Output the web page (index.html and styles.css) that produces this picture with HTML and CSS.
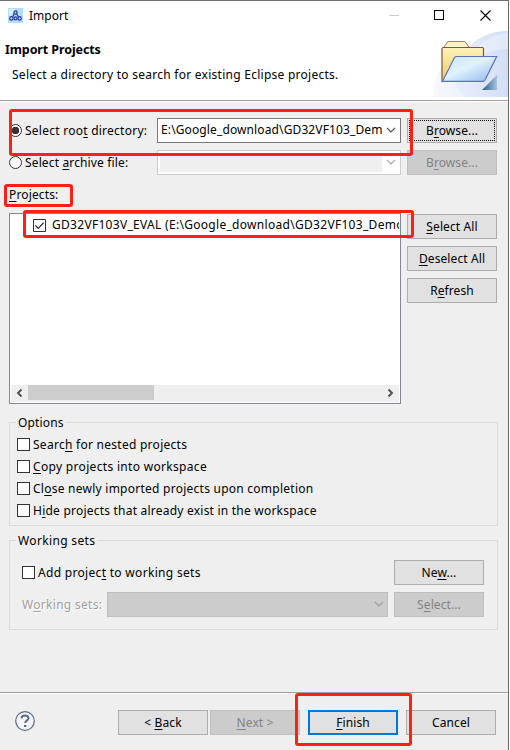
FILE: index.html
```
<!DOCTYPE html>
<html lang="en">
<head>
<meta charset="utf-8">
<title>Import</title>
<link rel="stylesheet" href="styles.css">
</head>
<body>
<div class="window">
  <header class="header">
    <div class="titlebar">
      <svg class="app-icon" width="15" height="15" viewBox="0 0 15 15"><rect width="15" height="15" fill="#b5dcf8"/><path d="M1 1h7L1 9z" fill="#d8eefc"/><g fill="none" stroke="#28399a" stroke-width="1.2"><circle cx="7.5" cy="4.500" r="1.600"/><circle cx="3.400" cy="10.400" r="1.700"/><circle cx="7.5" cy="10.400" r="1.500"/><circle cx="11.600" cy="10.400" r="1.700"/><path d="M6.400 5.700L4.600 9M8.600 5.700L10.400 9"/></g></svg>
      <span class="title">Import</span>
      <svg class="controls" width="120" height="30" viewBox="0 0 120 30" fill="none" shape-rendering="crispEdges"><path d="M8 15.5h10" stroke="#ccc"/><rect x="53.500" y="10.500" width="9" height="9" stroke="#000"/><path d="M99.500 10.500l10 10M109.500 10.500l-10 10" stroke="#000" stroke-width="1.100" shape-rendering="auto"/></svg>
    </div>
    <h1>Import Projects</h1>
    <p>Select a directory to search for existing Eclipse projects.</p>
    <svg class="banner" width="75" height="68" viewBox="433 30 75 68">
      <defs>
        <linearGradient id="bg" x1="0" x2="1"><stop offset="0" stop-color="#f3f6fd"/><stop offset="1" stop-color="#d3def5"/></linearGradient>
        <linearGradient id="back" x1="0" y1="0" x2="0" y2="1"><stop offset="0" stop-color="#fdf3b8"/><stop offset="1" stop-color="#ecca60"/></linearGradient>
        <linearGradient id="front" x1="0" y1="0" x2="1" y2="1"><stop offset="0" stop-color="#cfe3fb"/><stop offset=".45" stop-color="#dff2fe"/><stop offset="1" stop-color="#8fb5ea"/></linearGradient>
        <linearGradient id="tri"><stop offset="0" stop-color="#2d568e"/><stop offset="1" stop-color="#a5c4dc"/></linearGradient>
      </defs>
      <path d="M433 97C434 73 446 57 463 52C475 39 488 31 508 31V97z" fill="url(#bg)"/>
      <path d="M433 97C434 81 440 68 450 61Q451 86 466 97zM472 52Q488 35 508 33V49Q490 49 480 58z" fill="#fff" opacity=".3"/>
      <path d="M444 47l4-5.500h17l4 5.500" fill="#fbf3c4" stroke="#a98055"/>
      <path d="M442 48.500q0-1 1-1h39.500q1 0 1 1V78l-41.500 3.500z" fill="url(#back)" stroke="#805549" stroke-width="1.200"/>
      <path d="M454.500 57.500q.6-1 2-1h40.200L485 80q-.7 1.300-2 1.300h-40.500z" fill="url(#front)" stroke="#5a73bd" stroke-width="1.200"/>
      <path d="M482 90h15V75z" fill="url(#tri)"/>
    </svg>
  </header>

  <main class="content">
    <section class="sources">
      <div class="source"><i class="radio on"></i><span class="label s1">Select roo<u>t</u> directory:</span><div class="combo"><span>E:\Google_download\GD32VF103_Dem</span><svg width="10" height="7" viewBox="0 0 10 7"><path d="M1 1l4 4 4-4" fill="none" stroke="#555" stroke-width="1.200"/></svg></div><button class="focused">B<u>r</u>owse...</button></div>
      <div class="source"><i class="radio"></i><span class="label s2">Select <u>a</u>rchive file:</span><div class="combo off"><span></span><svg width="10" height="7" viewBox="0 0 10 7"><path d="M1 1l4 4 4-4" fill="none" stroke="#aaa" stroke-width="1.200"/></svg></div><button disabled>B<u>r</u>owse...</button></div>
    </section>
    <div class="projects-label"><u>P</u>rojects:</div>
    <section class="projects">
      <div class="list">
        <div class="item"><svg class="check" width="13" height="13" viewBox="0 0 13 13"><path d="M.5.5h12v12H.5z" fill="#fff" stroke="#333"/><path d="M2.500 6.500L5.300 9.300l5.300-5.600" fill="none" stroke="#222" stroke-width="1.200"/></svg><span>GD32VF103V_EVAL (E:\Google_download\GD32VF103_Demo</span></div>
        <div class="scrollbar"><svg width="17" height="17" viewBox="0 0 17 17"><path d="M10.500 4.500L7 8l3.500 3.500" fill="none" stroke="#505050" stroke-width="1.900"/></svg><i class="thumb"></i><svg width="17" height="17" viewBox="0 0 17 17"><path d="M6.500 4.500L10 8l-3.500 3.500" fill="none" stroke="#505050" stroke-width="1.900"/></svg></div>
      </div>
      <div class="side"><button><u>S</u>elect All</button><button><u>D</u>eselect All</button><button>R<u>e</u>fresh</button></div>
    </section>
    <fieldset class="options">
      <legend>Options</legend>
      <div class="option"><i class="box"></i><span class="o1">Searc<u>h</u> for nested projects</span></div>
      <div class="option"><i class="box"></i><span class="o2"><u>C</u>opy projects into workspace</span></div>
      <div class="option"><i class="box"></i><span class="o3">Cl<u>o</u>se newly imported projects upon completion</span></div>
      <div class="option"><i class="box"></i><span class="o4">H<u>i</u>de projects that already exist in the workspace</span></div>
    </fieldset>
    <fieldset class="sets">
      <legend>Working sets</legend>
      <div class="set-row"><i class="box"></i><span class="w1">Add projec<u>t</u> to working sets</span><button>Ne<u>w</u>...</button></div>
      <div class="set-row"><span class="dim">W<u>o</u>rking sets:</span><div class="set-combo"><svg width="10" height="7" viewBox="0 0 10 7"><path d="M1 1l4 4 4-4" fill="none" stroke="#a0a0a0" stroke-width="1.200"/></svg></div><button disabled>S<u>e</u>lect...</button></div>
    </fieldset>
  </main>

  <footer class="footer">
    <svg class="help" width="22" height="22" viewBox="0 0 22 22" fill="none"><circle cx="11" cy="11" r="9.300" fill="#f3f5f9" stroke="#5d6c8b" stroke-width="1.200"/><path d="M7.500 8.400Q7.600 5.500 11 5.500q3.500 0 3.500 2.700c0 2.200-3.300 2.300-3.300 4.900" stroke="#5d6c8b" stroke-width="2"/><path d="M10 15h2.300v2H10z" fill="#5d6c8b"/></svg>
    <button class="back">&lt; <u>B</u>ack</button><button class="next" disabled><u>N</u>ext &gt;</button><button class="finish"><u>F</u>inish</button><button class="cancel">Cancel</button>
  </footer>
  <div class="mark m1"></div><div class="mark m2"></div><div class="mark m3"></div><div class="mark m4"></div>
</div>
</body>
</html>
```
FILE: styles.css
```
* { box-sizing: border-box; }
body { margin: 0; background: #fff; }
.window { position: relative; width: 509px; height: 750px; overflow: hidden; display: flex; flex-direction: column; background: #efefef; border-top: 1px solid #707070; border-right: 1px solid #696969; font: 12px/16px "Noto Sans", "Open Sans", sans-serif; color: #000; white-space: nowrap; }
u { text-decoration-thickness: 1px; text-underline-offset: 2px; text-decoration-skip-ink: none; }
button { width: 90px; height: 25px; flex: none; padding: 1px 0 0; border: 1px solid #adadad; background: #e1e1e1; font: inherit; letter-spacing: .1px; color: #000; }
button:disabled { background: #ccc; border-color: #bfbfbf; color: #838383; }
.header { position: relative; height: 100px; flex: none; background: #fff; border-bottom: 1px solid #a0a0a0; }
.titlebar { display: flex; height: 30px; align-items: center; padding: 0 7px 0 8px; }
.app-icon { margin-top: -1px; }
.title { margin-left: 6px; }
.controls { margin-left: auto; margin-top: -2px; }
.header h1 { margin: 11px 0 0 5px; font-size: 12.500px; line-height: 16px; letter-spacing: -.1px; }
.header p { margin: 9px 0 0 12px; letter-spacing: .26px; }
.banner { position: absolute; right: 0; top: 29px; }
.content { height: 591px; flex: none; padding: 16px 10px 0 9px; border-top: 1px solid #fff; }
.sources { display: grid; row-gap: 7px; }
.source { display: flex; align-items: center; }
.radio { width: 13px; height: 13px; flex: none; border: 1px solid #333; border-radius: 50%; background: #fff; }
.radio.on { background: radial-gradient(circle, #333 0 3.500px, #fff 4px); }
.label { width: 132px; margin-left: 3px; }
.s1 { letter-spacing: .25px; }
.s2 { letter-spacing: .14px; }
.combo { display: flex; align-items: center; width: 244px; height: 25px; margin-right: 6px; padding: 2px 4px 2px 3px; border: 1px solid #7a7a7a; background: #fff; }
.combo span { width: 221px; height: 17px; overflow: hidden; margin-right: auto; line-height: 16px; letter-spacing: .12px; }
.combo.off { border-color: #ccc; padding-left: 2px; }
.combo.off span { background: #efefef; width: 222px; height: 19px; }
.focused { outline: 1px dotted #000; outline-offset: -3px; }
.projects-label { margin: 12px 0 10px; letter-spacing: .14px; }
.projects { display: flex; gap: 6px; }
.list { display: flex; flex-direction: column; width: 392px; height: 191px; border: 1px solid #828790; background: #fff; padding: 1px; }
.item { display: flex; align-items: center; height: 20px; padding-left: 22px; width: 388px; overflow: hidden; letter-spacing: .3px; }
.check { flex: none; margin-right: 6px; }
.scrollbar { display: flex; height: 17px; background: #efefef; margin-top: auto; }
.thumb { width: 126px; height: 15px; background: #cdcdcd; margin-right: auto; }
.side { display: flex; flex-direction: column; gap: 7px; padding-top: 1px; }
fieldset { margin: 0; min-width: 0; border: 1px solid #dcdcdc; width: 489px; }
legend { padding: 1px 2px 0; height: 16px; letter-spacing: .15px; }
.options { margin-top: 10px; height: 112px; padding: 3px 7px; }
.options legend { margin-left: -1px; }
.option { display: flex; align-items: center; height: 22px; gap: 3px; }
.option span { padding-top: 2px; }
.o1 { letter-spacing: .27px; }
.o2 { letter-spacing: .32px; }
.o3 { letter-spacing: .25px; }
.o4 { letter-spacing: .22px; }
.w1 { letter-spacing: .31px; }
.box { width: 13px; height: 13px; flex: none; border: 1px solid #333; background: #fff; }
.sets { margin-top: 6px; height: 98px; padding: 12px 13px 0 12px; }
.sets legend { margin-left: -6px; letter-spacing: .35px; }
.set-row { display: flex; align-items: center; margin-bottom: 7px; }
.set-row .box { margin-right: 3px; }
.set-row button { margin-left: auto; }
.dim { width: 85px; color: #a0a0a0; text-shadow: 1px 1px #fff; letter-spacing: .3px; }
.set-combo { display: flex; align-items: center; justify-content: flex-end; width: 281px; height: 25px; padding-right: 3px; background: #ccc; border: 1px solid #bfbfbf; }
.footer { display: flex; height: 58px; padding: 17px 0 0 14px; border-top: 1px solid #a0a0a0; box-shadow: inset 0 1px #fff; }
.back { margin-left: 82px; }
.next { margin-left: 2px; }
.finish { margin-left: 8px; border: 2px solid #0078d7; }
.cancel { margin-left: 8px; }
.mark { position: absolute; border: 3px solid #fe2014; border-radius: 3px; }
.m1 { left: 9px; top: 108px; width: 404px; height: 47px; }
.m2 { left: 4px; top: 183px; width: 69px; height: 23px; }
.m3 { left: 23px; top: 209px; width: 391px; height: 28px; }
.m4 { left: 295px; top: 692px; width: 117px; height: 53px; }
```
